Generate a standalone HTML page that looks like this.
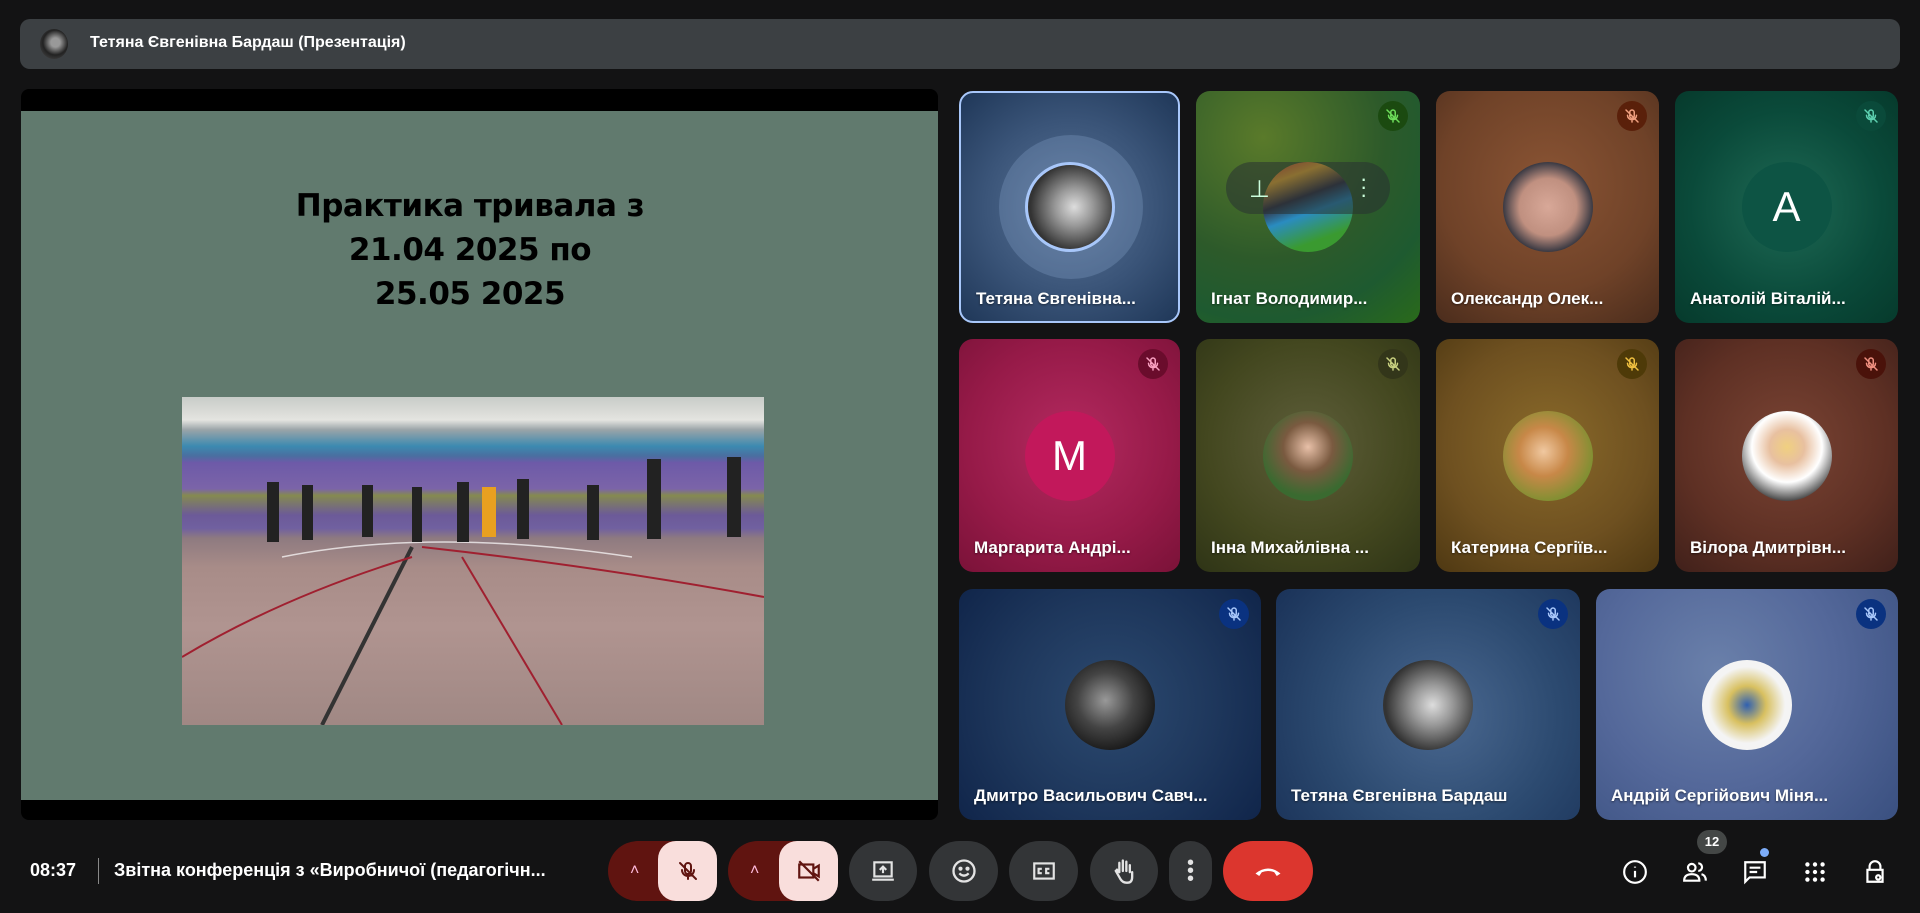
<!DOCTYPE html>
<html><head><meta charset="utf-8"><style>
*{margin:0;padding:0;box-sizing:border-box}
body{width:1920px;height:913px;background:#131314;font-family:"Liberation Sans","DejaVu Sans",sans-serif;position:relative;overflow:hidden;color:#fff}
.abs{position:absolute}
.tile{position:absolute;border-radius:14px;overflow:hidden}
.nm{position:absolute;left:15px;bottom:14px;font-size:17px;font-weight:bold;color:#fff;white-space:nowrap;text-shadow:0 1px 2px rgba(0,0,0,.5)}
.av{position:absolute;width:90px;height:90px;border-radius:50%;left:50%;top:50%;margin:-45px 0 0 -45px;display:flex;align-items:center;justify-content:center;font-size:42px;color:#fff;overflow:hidden}
.mic{position:absolute;right:12px;top:10px;width:30px;height:30px;border-radius:50%;display:flex;align-items:center;justify-content:center}
.btn{position:absolute;top:841px;height:60px;border-radius:30px;background:#333537;display:flex;align-items:center;justify-content:center}
.ri{position:absolute;top:859px;width:26px;height:26px}
</style></head><body>
<svg width="0" height="0" style="position:absolute"><defs>
<symbol id="m" viewBox="0 0 24 24"><path d="M12 4a3 3 0 0 1 3 3v5a3 3 0 0 1-6 0V7a3 3 0 0 1 3-3zM6 11a6 6 0 0 0 12 0M12 17v3M4 4l16 16" fill="none" stroke="currentColor" stroke-width="2" stroke-linecap="round"/></symbol>
</defs></svg>

<!-- top bar -->
<div class="abs" style="left:20px;top:19px;width:1880px;height:50px;background:#3c4043;border-radius:10px"></div>
<div class="abs" style="left:40px;top:29px;width:28px;height:30px;border-radius:50%;background:radial-gradient(circle at 55% 45%,#999 0 20%,#222 55%,#555)"></div>
<div class="abs" style="left:90px;top:34px;font-size:16px;font-weight:bold">Тетяна Євгенівна Бардаш (Презентація)</div>

<!-- presentation -->
<div class="abs" style="left:21px;top:89px;width:917px;height:731px;background:#000;border-radius:8px"></div>
<div class="abs" style="left:21px;top:111px;width:917px;height:689px;background:#617a6e"></div>
<div class="abs" style="left:180px;top:184px;width:580px;text-align:center;font-family:'DejaVu Sans',sans-serif;font-weight:bold;font-size:31px;line-height:44px;color:#000;letter-spacing:-0.5px">Практика тривала з<br>21.04 2025 по<br>25.05 2025</div>
<div class="abs" style="left:182px;top:397px;width:582px;height:328px;overflow:hidden;background:linear-gradient(180deg,#c8ccc8 0%,#e4e4e0 7%,#9aa4a8 10%,#3c8ab0 15%,#4a6ea0 18%,#6d5aa8 20%,#7b64a8 28%,#858a50 30%,#6c5a98 36%,#7060a0 40%,#8e7a80 43%,#a88c88 52%,#b09490 70%,#a08884 100%)">
<svg width="582" height="328" style="position:absolute;left:0;top:0">
<path d="M230 150 L140 328" stroke="#333" stroke-width="4"/>
<path d="M230 160 Q100 200 0 260" stroke="#a02030" stroke-width="2" fill="none"/>
<path d="M240 150 Q420 170 582 200" stroke="#a02030" stroke-width="2" fill="none"/>
<path d="M280 160 L380 328" stroke="#a02030" stroke-width="2"/>
<path d="M100 160 Q250 130 450 160" stroke="#fff" stroke-width="1.5" fill="none" opacity=".7"/>
<g fill="#222"><rect x="85" y="85" width="12" height="60"/><rect x="120" y="88" width="11" height="55"/><rect x="180" y="88" width="11" height="52"/><rect x="230" y="90" width="10" height="55"/><rect x="275" y="85" width="12" height="60"/><rect x="335" y="82" width="12" height="60"/><rect x="405" y="88" width="12" height="55"/><rect x="465" y="62" width="14" height="80"/><rect x="545" y="60" width="14" height="80"/></g>
<rect x="300" y="90" width="14" height="50" fill="#e8a020"/>
</svg></div>

<!-- row 1 -->
<div class="tile" style="left:959px;top:91px;width:221px;height:232px;background:radial-gradient(circle at 50% 50%,#5b7598 0,#3a5478 55%,#1f3758 100%);border:2px solid #a8c7fa">
<div class="abs" style="left:38px;top:42px;width:144px;height:144px;border-radius:50%;background:rgba(140,170,210,.28)"></div>
<div class="av" style="border:3px solid #a8c7fa;background:radial-gradient(circle at 55% 50%,#ddd 0,#999 30%,#333 70%)"></div>
<div class="nm" style="bottom:12px">Тетяна Євгенівна...</div></div>
<div class="tile" style="left:1196px;top:91px;width:224px;height:232px;background:radial-gradient(circle at 30% 20%,#5a7a2a,#2d5a2a 50%,#1e5a30 75%,#2a6a1a)">
<div class="av" style="background:linear-gradient(160deg,#d43 0,#fb3 20%,#334 40%,#2a8cc0 55%,#3a9a30 80%)"></div>
<div class="abs" style="left:30px;top:71px;width:164px;height:52px;border-radius:26px;background:rgba(40,50,50,.55)"></div>
<div class="abs" style="left:53px;top:84px;font-size:24px;color:#cfd">⊥</div>
<div class="abs" style="left:164px;top:84px;font-size:22px;color:#cfd;line-height:8px">·<br>·<br>·</div>
<div class="mic" style="background:#1b4a10;color:#6ddd5a"><svg width="18" height="18"><use href="#m"/></svg></div>
<div class="nm">Ігнат Володимир...</div></div>
<div class="tile" style="left:1436px;top:91px;width:223px;height:232px;background:radial-gradient(circle at 50% 40%,#8a5434,#6f4228 60%,#4a2c1c)">
<div class="av" style="background:radial-gradient(circle at 50% 50%,#d8a898 0,#c09080 45%,#222a38 75%)"></div>
<div class="mic" style="background:#5a200a;color:#f0a080"><svg width="18" height="18"><use href="#m"/></svg></div>
<div class="nm">Олександр Олек...</div></div>
<div class="tile" style="left:1675px;top:91px;width:223px;height:232px;background:radial-gradient(circle at 50% 50%,#1f6a55,#0a4a3a 60%,#063a2c)">
<div class="av" style="background:#0d5444">A</div>
<div class="mic" style="background:#0a4a3a;color:#5dd0b0"><svg width="18" height="18"><use href="#m"/></svg></div>
<div class="nm">Анатолій Віталій...</div></div>

<!-- row 2 -->
<div class="tile" style="left:959px;top:339px;width:221px;height:233px;background:radial-gradient(circle at 50% 45%,#b42a60,#961a48 60%,#7a1238)">
<div class="av" style="background:#c2185b">M</div>
<div class="mic" style="background:#6a0c2c;color:#f8a0c0"><svg width="18" height="18"><use href="#m"/></svg></div>
<div class="nm">Маргарита Андрі...</div></div>
<div class="tile" style="left:1196px;top:339px;width:224px;height:233px;background:radial-gradient(circle at 50% 45%,#5e5e3a,#43471f 60%,#2e3416)">
<div class="av" style="background:radial-gradient(circle at 50% 40%,#e8c0a8 0,#7a5a40 35%,#3a6a30 70%)"></div>
<div class="mic" style="background:#33361a;color:#c8d080"><svg width="18" height="18"><use href="#m"/></svg></div>
<div class="nm">Інна Михайлівна ...</div></div>
<div class="tile" style="left:1436px;top:339px;width:223px;height:233px;background:radial-gradient(circle at 50% 45%,#8a6a2a,#6e5020 60%,#4e3812)">
<div class="av" style="background:radial-gradient(circle at 45% 45%,#f0c8a0 0,#c88848 35%,#7a9030 75%)"></div>
<div class="mic" style="background:#4e3a08;color:#f0c040"><svg width="18" height="18"><use href="#m"/></svg></div>
<div class="nm">Катерина Сергіїв...</div></div>
<div class="tile" style="left:1675px;top:339px;width:223px;height:233px;background:radial-gradient(circle at 50% 45%,#7a4434,#5e3024 60%,#40201a)">
<div class="av" style="background:radial-gradient(circle at 50% 40%,#f0d080 0,#e8c0a0 25%,#fff 50%,#333 80%)"></div>
<div class="mic" style="background:#4a120a;color:#f09080"><svg width="18" height="18"><use href="#m"/></svg></div>
<div class="nm">Вілора Дмитрівн...</div></div>

<!-- row 3 -->
<div class="tile" style="left:959px;top:589px;width:302px;height:231px;background:radial-gradient(circle at 50% 50%,#2c4a70,#1e375c 55%,#10254a)">
<div class="av" style="background:radial-gradient(circle at 45% 45%,#999 0,#444 40%,#111 80%)"></div>
<div class="mic" style="background:#0a3280;color:#a8c7fa"><svg width="18" height="18"><use href="#m"/></svg></div>
<div class="nm">Дмитро Васильович Савч...</div></div>
<div class="tile" style="left:1276px;top:589px;width:304px;height:231px;background:radial-gradient(circle at 55% 55%,#4a6890,#2c4a70 55%,#1a3258)">
<div class="av" style="background:radial-gradient(circle at 55% 50%,#ddd 0,#999 30%,#333 70%)"></div>
<div class="mic" style="background:#0a3280;color:#a8c7fa"><svg width="18" height="18"><use href="#m"/></svg></div>
<div class="nm">Тетяна Євгенівна Бардаш</div></div>
<div class="tile" style="left:1596px;top:589px;width:302px;height:231px;background:radial-gradient(circle at 40% 35%,#6a80aa,#54689a 50%,#3a5080)">
<div class="av" style="background:radial-gradient(circle at 50% 50%,#3060b0 0,#d8c060 30%,#f4f4f4 60%)"></div>
<div class="mic" style="background:#0a3280;color:#a8c7fa"><svg width="18" height="18"><use href="#m"/></svg></div>
<div class="nm">Андрій Сергійович Міня...</div></div>

<!-- bottom bar -->
<div class="abs" style="left:30px;top:860px;font-size:18px;font-weight:bold">08:37</div>
<div class="abs" style="left:98px;top:858px;width:1px;height:26px;background:#888"></div>
<div class="abs" style="left:114px;top:860px;font-size:18px;font-weight:bold;white-space:nowrap">Звітна конференція з «Виробничої (педагогічн...</div>

<div class="btn" style="left:608px;width:109px;background:#601410;justify-content:flex-start;padding-left:22px;font-size:16px;color:#fbd">&#x2c4;</div>
<div class="btn" style="left:658px;width:59px;border-radius:18px;background:#f9dedc;color:#601410"><svg width="24" height="24"><use href="#m"/></svg></div>
<div class="btn" style="left:728px;width:110px;background:#601410;justify-content:flex-start;padding-left:22px;font-size:16px;color:#fbd">&#x2c4;</div>
<div class="btn" style="left:779px;width:59px;border-radius:18px;background:#f9dedc;color:#601410"><svg width="26" height="26" viewBox="0 0 24 24" fill="none" stroke="currentColor" stroke-width="2"><rect x="3" y="6" width="13" height="12"/><path d="M16 10l5-3v10l-5-3M3 3l18 18"/></svg></div>
<div class="btn" style="left:849px;width:68px;color:#e3e3e3"><svg width="26" height="26" viewBox="0 0 24 24" fill="none" stroke="currentColor" stroke-width="2"><rect x="4" y="4" width="16" height="13"/><path d="M2 20h20M12 14V8M9 11l3-3 3 3"/></svg></div>
<div class="btn" style="left:929px;width:69px;color:#e3e3e3"><svg width="28" height="28" viewBox="0 0 24 24" fill="none" stroke="currentColor" stroke-width="2"><circle cx="12" cy="12" r="9"/><circle cx="9" cy="10" r=".8" fill="currentColor"/><circle cx="15" cy="10" r=".8" fill="currentColor"/><path d="M8 14q4 4 8 0"/></svg></div>
<div class="btn" style="left:1009px;width:69px;color:#e3e3e3"><svg width="26" height="26" viewBox="0 0 24 24" fill="none" stroke="currentColor" stroke-width="2"><rect x="3" y="5" width="18" height="14"/><path d="M10 10H7v4h3M17 10h-3v4h3"/></svg></div>
<div class="btn" style="left:1090px;width:68px;color:#e3e3e3"><svg width="28" height="28" viewBox="0 0 24 24" fill="none" stroke="currentColor" stroke-width="2" stroke-linecap="round"><path d="M8 13V5M11 12V3M14 12V4M17 13V7M8 13l-2-2-1 1 4 7q2 3 5 3h1q4 0 4-5v-4"/></svg></div>
<div class="btn" style="left:1169px;width:43px;color:#e3e3e3;font-size:20px;line-height:8px;flex-direction:column"><span>•</span><span>•</span><span>•</span></div>
<div class="btn" style="left:1223px;width:90px;background:#dc362e"><svg width="30" height="30" viewBox="0 0 24 24" fill="#fff"><path d="M2 14q10-8 20 0l-3 2-2-3q-5-2-10 0l-2 3z"/></svg></div>

<svg class="ri" style="left:1622px" viewBox="0 0 24 24" fill="none" stroke="#fff" stroke-width="2"><circle cx="12" cy="12" r="10"/><path d="M12 11v6M12 7v1"/></svg>
<div class="abs" style="left:1697px;top:830px;width:30px;height:24px;border-radius:12px;background:#444746;font-size:13px;text-align:center;line-height:24px;font-weight:bold">12</div>
<svg class="ri" style="left:1682px" viewBox="0 0 24 24" fill="none" stroke="#fff" stroke-width="2"><circle cx="9" cy="8" r="3.5"/><path d="M2 20q0-6 7-6t7 6zM15 4a3.5 3.5 0 0 1 0 7M18 14q4 1 4 6"/></svg>
<svg class="ri" style="left:1742px" viewBox="0 0 24 24" fill="none" stroke="#fff" stroke-width="2"><path d="M3 3h18v14H7l-4 4zM7 8h10M7 12h7"/></svg>
<div class="abs" style="left:1760px;top:848px;width:9px;height:9px;border-radius:50%;background:#7cacf8"></div>
<svg class="ri" style="left:1802px" viewBox="0 0 24 24" fill="#fff"><circle cx="5" cy="5" r="2"/><circle cx="12" cy="5" r="2"/><circle cx="19" cy="5" r="2"/><circle cx="5" cy="12" r="2"/><circle cx="12" cy="12" r="2"/><circle cx="19" cy="12" r="2"/><circle cx="5" cy="19" r="2"/><circle cx="12" cy="19" r="2"/><circle cx="19" cy="19" r="2"/></svg>
<svg class="ri" style="left:1862px" viewBox="0 0 24 24" fill="none" stroke="#fff" stroke-width="2"><path d="M7 10V7a5 5 0 0 1 10 0v3M5 10h14v11H5z"/><circle cx="15" cy="17" r="2"/></svg>
</body></html>
